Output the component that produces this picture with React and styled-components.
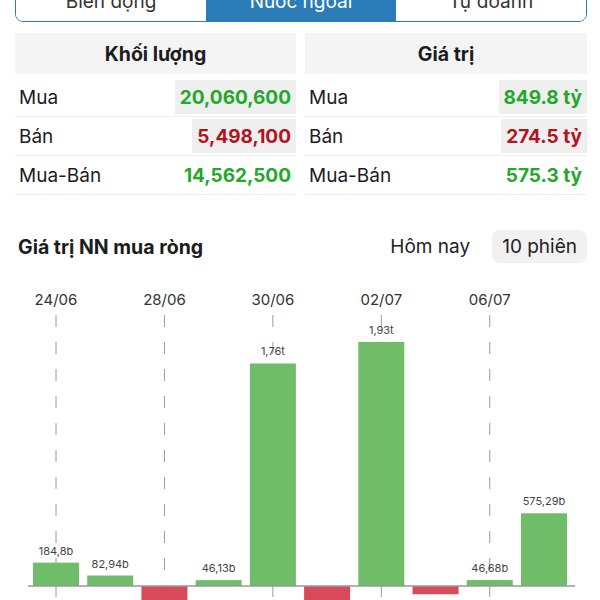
import React from 'react';
import styled, { createGlobalStyle } from 'styled-components';

const GlobalStyle = createGlobalStyle`
  body {
    margin: 0;
    background: #fff;
    font-family: Inter, "Noto Sans", sans-serif;
    color: #1c1c1e;
  }
`;

const Page = styled.div`
  width: 600px;
  height: 600px;
  overflow: hidden;
`;

const Inner = styled.div`
  margin-top: -20px;
  padding: 0 13px 0 15px;
`;

const Tabs = styled.div`
  display: flex;
  height: 42px;
  border: 1.5px solid #2a7db8;
  border-radius: 8px;
  overflow: hidden;
  box-sizing: border-box;
`;

const Tab = styled.div`
  flex: 1;
  display: flex;
  align-items: center;
  justify-content: center;
  font-size: 19px;
  color: ${p => (p.$active ? '#fff' : '#333')};
  background: ${p => (p.$active ? '#2a7db8' : '#fff')};
`;

const Tables = styled.div`
  display: grid;
  grid-template-columns: 281px 282px;
  gap: 9px;
  margin-top: 11px;
`;

const Panel = styled.div`
  display: flex;
  flex-direction: column;
`;

const PanelHead = styled.div`
  height: 41px;
  display: flex;
  align-items: center;
  justify-content: center;
  background: #f4f4f4;
  font-size: 19.5px;
  font-weight: 700;
  margin-bottom: 4px;
`;

const Row = styled.div`
  height: 38px;
  display: flex;
  align-items: center;
  justify-content: space-between;
  border-bottom: 1px solid #eeeeee;
`;

const Label = styled.span`
  font-size: 19px;
  padding-left: 4px;
`;

const Value = styled.span`
  align-self: stretch;
  margin: 2px 0;
  padding: 0 5px;
  display: flex;
  align-items: center;
  font-size: 19px;
  font-weight: 700;
  color: ${p => (p.$down ? '#b3121f' : '#22a82a')};
  background: ${p => (p.$hl ? '#efefef' : 'transparent')};
`;

const ChartHead = styled.div`
  display: flex;
  align-items: center;
  justify-content: space-between;
  margin-top: 35px;
  padding-left: 3px;
`;

const ChartTitle = styled.h2`
  margin: 0;
  font-size: 19.5px;
  font-weight: 700;
`;

const Segments = styled.div`
  display: flex;
  gap: 12px;
`;

const Segment = styled.div`
  height: 33px;
  padding: 0 10px;
  display: flex;
  align-items: center;
  font-size: 19px;
  color: #222;
  border-radius: 8px;
  background: ${p => (p.$active ? '#f1f1f1' : 'transparent')};
`;

const ChartSvg = styled.svg`
  display: block;
  margin-top: 12px;
  overflow: visible;
`;

const stats = [
  {
    title: 'Khối lượng',
    rows: [
      { label: 'Mua', value: '20,060,600', hl: true },
      { label: 'Bán', value: '5,498,100', hl: true, down: true },
      { label: 'Mua-Bán', value: '14,562,500' },
    ],
  },
  {
    title: 'Giá trị',
    rows: [
      { label: 'Mua', value: '849.8 tỷ', hl: true },
      { label: 'Bán', value: '274.5 tỷ', hl: true, down: true },
      { label: 'Mua-Bán', value: '575.3 tỷ' },
    ],
  },
];

// values in billions
const bars = [
  { v: 184.8, text: '184,8b', date: '24/06' },
  { v: 82.94, text: '82,94b' },
  { v: -200, text: '-200b', date: '28/06' },
  { v: 46.13, text: '46,13b' },
  { v: 1760, text: '1,76t', date: '30/06' },
  { v: -190, text: '-190b' },
  { v: 1930, text: '1,93t', date: '02/07' },
  { v: -65, text: '-65b' },
  { v: 46.68, text: '46,68b', date: '06/07' },
  { v: 575.29, text: '575,29b' },
];

const BarChart = () => {
  const base = 311;
  const scale = 244 / 1930;
  const pitch = 54.22;
  const x0 = 18;
  const w = 46;
  return (
    <ChartSvg width="570" height="330">
      {bars.map((b, i) =>
        b.date ? (
          <g key={'d' + i}>
            <text
              x={x0 + i * pitch + w / 2}
              y="30"
              textAnchor="middle"
              fontSize="15"
              fill="#333"
              fontFamily="Inter, sans-serif"
            >
              {b.date}
            </text>
            <line
              x1={x0 + i * pitch + w / 2}
              x2={x0 + i * pitch + w / 2}
              y1="40"
              y2="340"
              stroke="#9a9a9a"
              strokeWidth="1"
              strokeDasharray="12 15"
            />
          </g>
        ) : null
      )}
      {bars.map((b, i) => {
        const h = Math.abs(b.v) * scale;
        const x = x0 + i * pitch;
        const up = b.v >= 0;
        return (
          <g key={i}>
            <rect
              x={x}
              y={up ? base - h : base}
              width={w}
              height={h}
              fill={up ? '#6fbd68' : '#d84a5a'}
            />
            <text
              x={x + w / 2}
              y={up ? base - h - 8 : base + h + 14}
              textAnchor="middle"
              fontSize="11"
              fill="#444"
              fontFamily="Inter, sans-serif"
            >
              {b.text}
            </text>
          </g>
        );
      })}
      <line x1="13" x2="560" y1={base} y2={base} stroke="#999" strokeWidth="1.5" />
    </ChartSvg>
  );
};

export default function App() {
  return (
    <Page>
      <GlobalStyle />
      <Inner>
        <Tabs>
          <Tab>Biến động</Tab>
          <Tab $active>Nước ngoài</Tab>
          <Tab>Tự doanh</Tab>
        </Tabs>
        <Tables>
          {stats.map(s => (
            <Panel key={s.title}>
              <PanelHead>{s.title}</PanelHead>
              {s.rows.map(r => (
                <Row key={r.label}>
                  <Label>{r.label}</Label>
                  <Value $hl={r.hl} $down={r.down}>{r.value}</Value>
                </Row>
              ))}
            </Panel>
          ))}
        </Tables>
        <ChartHead>
          <ChartTitle>Giá trị NN mua ròng</ChartTitle>
          <Segments>
            <Segment>Hôm nay</Segment>
            <Segment $active>10 phiên</Segment>
          </Segments>
        </ChartHead>
        <BarChart />
      </Inner>
    </Page>
  );
}
